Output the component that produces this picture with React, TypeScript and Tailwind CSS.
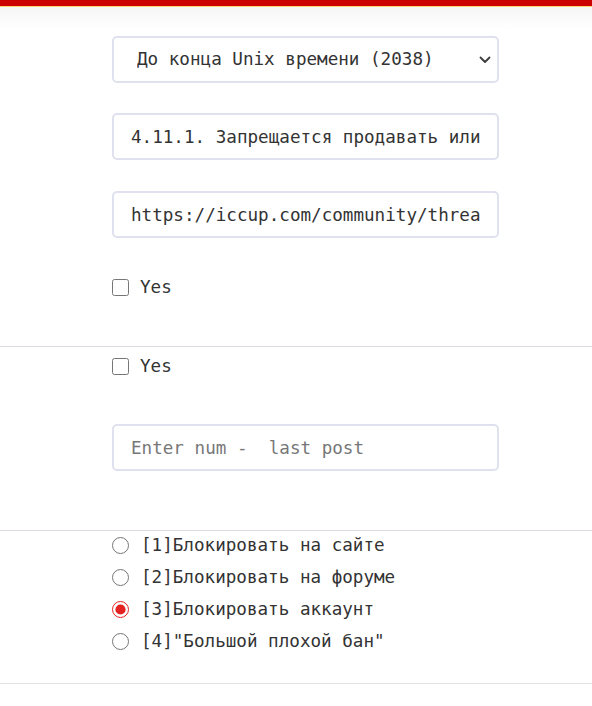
import React from 'react';

const mono = { fontFamily: '"DejaVu Sans Mono", "Liberation Mono", monospace' };

const field =
    'w-full h-[47px] px-[17px] rounded-[5px] border-2 border-[#dfe1ee] bg-white text-[17.6px] text-[#333] outline-none placeholder:text-[#777]';

export default function App() {
    const radios = [
        '[1]Блокировать на сайте',
        '[2]Блокировать на форуме',
        '[3]Блокировать аккаунт',
        '[4]"Большой плохой бан"',
    ];

    return (
        <div className="min-h-[706px] w-[592px] bg-white text-[#333] text-[17.6px]" style={mono}>
            <div className="h-[6px] bg-[#cc0000]" />
            <div className="h-px bg-[#ffd27a]" />
            <div className="h-[22px] bg-gradient-to-b from-[#f5f5f5] to-white" />

            <div className="ml-[112px] w-[387px] pt-[7px]">
                <div className="relative">
                    <select className={`${field} appearance-none pl-[23px]`} defaultValue="2038">
                        <option value="2038">До конца Unix времени (2038)</option>
                    </select>
                    <svg
                        className="absolute right-[7px] top-[19px] pointer-events-none"
                        width="14"
                        height="10"
                        viewBox="0 0 14 10"
                        fill="none"
                        stroke="#3c3c3c"
                        strokeWidth="1.8"
                        strokeLinecap="round"
                        strokeLinejoin="round"
                    >
                        <path d="M2.5 2.5 L7 7 L11.5 2.5" />
                    </svg>
                </div>
                <input
                    className={`${field} mt-[30px]`}
                    defaultValue="4.11.1. Запрещается продавать или передавать аккаунт"
                />
                <input
                    className={`${field} mt-[31px]`}
                    defaultValue="https://iccup.com/community/thread/123456.html"
                />
                <label className="mt-[40px] flex items-center gap-[11px] h-[18px]">
                    <input type="checkbox" className="w-[17px] h-[17px] m-0" />
                    <span>Yes</span>
                </label>
            </div>

            <div className="mt-[50px] border-t border-[#d9dde3]" />

            <div className="ml-[112px] w-[387px] pt-[10px]">
                <label className="flex items-center gap-[11px] h-[18px]">
                    <input type="checkbox" className="w-[17px] h-[17px] m-0" />
                    <span>Yes</span>
                </label>
                <input className={`${field} mt-[49px]`} placeholder="Enter num -  last post" />
            </div>

            <div className="mt-[59px] border-t border-[#d9dde3]" />

            <div className="ml-[112px] w-[387px] pt-[5px] flex flex-col gap-[14px]">
                {radios.map((r, i) => (
                    <label key={r} className="flex items-center gap-[12px] h-[18px]">
                        <input
                            type="radio"
                            name="ban"
                            defaultChecked={i === 2}
                            className="w-[17px] h-[17px] m-0 accent-[#e52222]"
                        />
                        <span>{r}</span>
                    </label>
                ))}
            </div>

            <div className="mt-[33px] border-t border-[#e2e2e2]" />
        </div>
    );
}
